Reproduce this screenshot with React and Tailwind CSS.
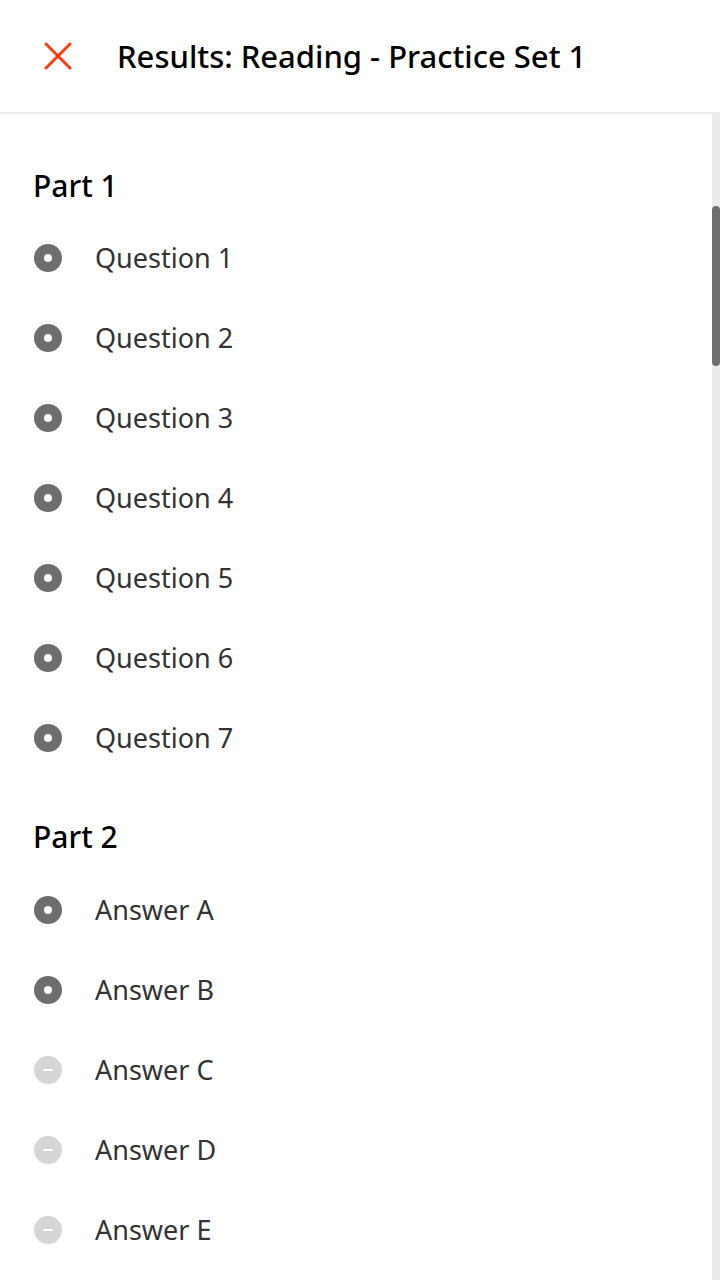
import React from "react";

const font = { fontFamily: '"Noto Sans", "Open Sans", sans-serif' };

function DotIcon() {
  return (
    <span className="flex h-[28px] w-[28px] items-center justify-center rounded-full bg-[#6e6e6e]">
      <span className="h-[8px] w-[8px] rounded-full bg-white" />
    </span>
  );
}

function DashIcon() {
  return (
    <span className="flex h-[28px] w-[28px] items-center justify-center rounded-full bg-[#d6d6d6]">
      <span className="h-[2px] w-[10px] rounded-full bg-white" />
    </span>
  );
}

function Item({ label, answered }) {
  return (
    <div className="flex h-[80px] items-center">
      <div className="ml-[34px] flex w-[61px] shrink-0">
        {answered ? <DotIcon /> : <DashIcon />}
      </div>
      <span className="text-[27px] text-[#333333]">{label}</span>
    </div>
  );
}

export default function App() {
  const part1 = [1, 2, 3, 4, 5, 6, 7].map((n) => `Question ${n}`);
  const part2 = [
    ["Answer A", true],
    ["Answer B", true],
    ["Answer C", false],
    ["Answer D", false],
    ["Answer E", false],
  ];
  return (
    <div className="flex h-[1280px] w-[720px] flex-col overflow-hidden bg-white" style={font}>
      <header className="flex h-[114px] shrink-0 items-center border-b-2 border-[#ededed]">
        <div className="ml-[44px] flex w-[73px] shrink-0">
          <svg width="28" height="28" viewBox="0 0 28 28" fill="none">
            <path d="M2 2 L26 26 M26 2 L2 26" stroke="#ff3b0a" strokeWidth="3" strokeLinecap="round" />
          </svg>
        </div>
        <h1 className="text-[31px] font-medium text-black">Results: Reading - Practice Set 1</h1>
      </header>
      <div className="flex min-h-0 flex-1">
        <main className="flex-1 pt-[52px]">
          <h2 className="mb-3 ml-[33px] text-[30px] leading-[40px] font-medium text-black">Part 1</h2>
          {part1.map((q) => (
            <Item key={q} label={q} answered />
          ))}
          <h2 className="mt-[39px] mb-[13px] ml-[33px] text-[30px] leading-[40px] font-medium text-black">Part 2</h2>
          {part2.map(([a, ok]) => (
            <Item key={a} label={a} answered={ok} />
          ))}
        </main>
        <div className="w-[8px] shrink-0 bg-[#ebebeb] pt-[92px]">
          <div className="h-[160px] w-[8px] rounded-full bg-[#6e6e6e]" />
        </div>
      </div>
    </div>
  );
}
